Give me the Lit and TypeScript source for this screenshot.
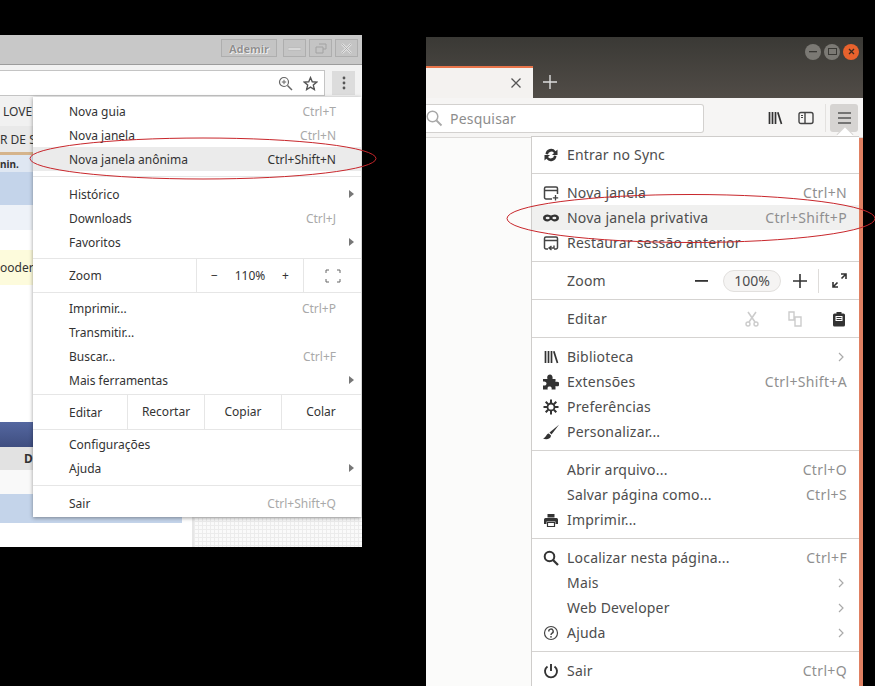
import { LitElement, html, css, svg } from "lit";
import { customElement } from "lit/decorators.js";

const chromeRow = (label: string, sc = "", arrow = false, hl = false) => html`
  <div class="c-row ${hl ? "hl" : ""}">
    <span>${label}</span>
    ${sc ? html`<span class="sc">${sc}</span>` : ""}
    ${arrow ? html`<span class="tri"></span>` : ""}
  </div>`;

const ic = (body: unknown, vb = "0 0 16 16") =>
  html`<svg class="ic" viewBox=${vb} width="16" height="16">${body}</svg>`;

const icons: Record<string, unknown> = {
  sync: ic(svg`<path d="M2.500 7A5.600 5.600 0 0 1 12.600 4.200L14.500 2.500V8H9L11 6A3.300 3.300 0 0 0 5 7.600ZM13.500 9A5.600 5.600 0 0 1 3.400 11.800L1.500 13.500V8H7L5 10A3.300 3.300 0 0 0 11 8.400Z" fill="#333"/>`),
  win: ic(svg`<path d="M9 14H3A1.500 1.500 0 0 1 1.500 12.500V3.500A1.500 1.500 0 0 1 3 2H13A1.500 1.500 0 0 1 14.500 3.500V9" fill="none" stroke="#444" stroke-width="1.500"/><path d="M2 5.500H14" stroke="#444" stroke-width="1.500"/><path d="M12.500 10V15.500M9.800 12.800H15.200" stroke="#444" stroke-width="1.300"/>`),
  mask: ic(svg`<path d="M4.500 4.500C6 4.500 7 5.500 8 5.500S10 4.500 11.500 4.500C14 4.500 16 6 16 8S14 11.500 11.500 11.500C9.800 11.500 9 10 8 10S6.200 11.500 4.500 11.500C2 11.500 0 10 0 8S2 4.500 4.500 4.500Z" fill="#333"/><ellipse cx="4.600" cy="8" rx="2" ry="1.300" fill="#eee"/><ellipse cx="11.400" cy="8" rx="2" ry="1.300" fill="#eee"/>`),
  restore: ic(svg`<path d="M5 14H3A1.500 1.500 0 0 1 1.500 12.500V3.500A1.500 1.500 0 0 1 3 2H13A1.500 1.500 0 0 1 14.500 3.500V12.500A1.500 1.500 0 0 1 13 14H11" fill="none" stroke="#444" stroke-width="1.500"/><path d="M2 5.500H14" stroke="#444" stroke-width="1.500"/><path d="M11 10.500V13H6.500M8.500 11L6 13L8.500 15" fill="none" stroke="#444" stroke-width="1.400"/>`),
  lib: ic(svg`<path d="M2.500 2V14M5.500 2V14M8.500 2V14" stroke="#333" stroke-width="1.700"/><path d="M10.800 2.300L14.500 14" stroke="#333" stroke-width="1.700"/>`),
  ext: ic(svg`<path d="M0 5H4.500C3.500 2.500 5 .5 7 .5S10 2.500 9.500 5H12.500V8C15 7 16.500 8.500 16.500 10S15 13 12.500 12V15.500H8.500C9.200 13.500 8 12.500 6.500 12.500S4 13.500 4.800 15.500H0V11.500C2.500 12 3.500 10.800 3.500 9.500S2.500 7 0 7.500Z" fill="#333"/>`),
  gear: ic(svg`<circle cx="8" cy="8" r="3.500" fill="none" stroke="#333" stroke-width="1.800"/><path d="M8 .5V4M8 12V15.500M.5 8H4M12 8H15.500M2.700 2.700L5.200 5.200M10.800 10.800L13.300 13.300M13.300 2.700L10.800 5.200M5.200 10.800L2.700 13.300" stroke="#333" stroke-width="2"/>`),
  brush: ic(svg`<path d="M16 .8L6.500 8.500L8.500 10.500Z" fill="#333"/><path d="M5.800 9.500C3 10 3.500 13.500 0 14.500C3 16 8 15.200 8 11.500Z" fill="#333"/>`),
  print: ic(svg`<path d="M4.500 2H11.500V5.500H4.500Z" fill="#333"/><path d="M2.500 6H13.500A1.500 1.500 0 0 1 15 7.500V12H12.500V9.500H3.500V12H1V7.500A1.500 1.500 0 0 1 2.500 6Z" fill="#333"/><path d="M4.500 10.500H11.500V14.500H4.500Z" fill="none" stroke="#333" stroke-width="1.200"/>`),
  find: ic(svg`<circle cx="6.500" cy="6.500" r="4.800" fill="none" stroke="#333" stroke-width="2"/><path d="M10 10L15 15" stroke="#333" stroke-width="2.300"/>`),
  help: ic(svg`<circle cx="8" cy="8" r="6.500" fill="none" stroke="#444" stroke-width="1.200"/><path d="M5.800 6.500A2.200 2.200 0 1 1 8.800 8.300C8.100 8.700 8 9 8 10" fill="none" stroke="#444" stroke-width="1.400"/><circle cx="8" cy="11.800" r=".9" fill="#444"/>`),
  quit: ic(svg`<path d="M4.500 3.500A6 6 0 1 0 11.500 3.500" fill="none" stroke="#333" stroke-width="1.900"/><path d="M8 1V8" stroke="#333" stroke-width="1.900"/>`),
};

const chev = svg`<svg class="chev" viewBox="0 0 8 10" width="8" height="10"><path d="M2 1L6 5L2 9" fill="none" stroke="#aaa" stroke-width="1.200"/></svg>`;

const ffRow = (label: string, icon = "", sc = "", more = false, hl = false) => html`
  <div class="f-row ${hl ? "hl" : ""}">
    <span class="f-ic">${icon ? icons[icon] : ""}</span>
    <span class="f-label">${label}</span>
    ${sc ? html`<span class="f-sc">${sc}</span>` : ""}
    ${more ? chev : ""}
  </div>`;

@customElement("app-root")
export class AppRoot extends LitElement {
  static styles = css`
    :host { display: block; position: relative; width: 875px; height: 686px; background: #000; overflow: hidden; }
    .win { position: absolute; overflow: hidden; }

    /* Chrome window */
    .chrome { left: 0; top: 35px; width: 362px; height: 512px; background: #fff; font: 12px "Noto Sans", sans-serif; color: #333; }
    .c-title { height: 25px; background: #c8c8c8; border-bottom: 1px solid #9c9c9c; display: flex; justify-content: flex-end; align-items: flex-start; gap: 3px; padding: 4px 4px 0 0; }
    .c-btn { height: 16px; width: 21px; border: 1px solid #aeaeae; background: #c4c4c4; display: flex; align-items: center; justify-content: center; }
    .c-user { width: 54px; margin-right: 3px; font: bold 11px "Noto Sans", sans-serif; color: #8f8f8f; text-shadow: 0 0 1px #fff, 1px 1px 0 #eee; }
    .c-tool { height: 28px; background: #f2f2f2; display: flex; align-items: center; padding: 4px 7px 0 0; gap: 7px; }
    .omni { flex: 1; height: 26px; background: #fff; border: 1px solid #c4c4c4; border-left: none; box-sizing: border-box; display: flex; align-items: center; justify-content: flex-end; gap: 10px; padding-right: 6px; }
    .kebab { width: 23px; height: 24px; background: #dcdcdc; display: flex; align-items: center; justify-content: center; }
    .page { position: relative; height: 450px; font-size: 12px; background: #fff; }
    .p { height: var(--h); width: 192px; background: var(--bg); padding-left: 3px; box-sizing: border-box; display: flex; align-items: center; white-space: nowrap; overflow: hidden; }
    .grid { position: absolute; left: 192px; right: 0; bottom: 0; height: 30px; border-left: 2px solid #e6e6e6; background-color: #fafafa; background-image: linear-gradient(#ececec 1px, transparent 1px), linear-gradient(90deg, #ececec 1px, transparent 1px); background-size: 4px 4px; }
    .c-menu { position: absolute; left: 33px; top: 62px; width: 328px; height: 420px; background: #fff; box-shadow: 0 1px 4px rgba(0,0,0,.4); box-sizing: border-box; padding-top: 2px; }
    .c-row { height: 24px; display: flex; align-items: center; padding: 0 25px 0 36px; justify-content: space-between; position: relative; }
    .c-row.hl { background: #ebebeb; }
    .sc { color: #a9a9a9; }
    .hl .sc { color: #333; }
    .tri { position: absolute; right: 7px; top: 8px; border-left: 5px solid #777; border-top: 4px solid transparent; border-bottom: 4px solid transparent; }
    .c-sep { height: 1px; background: #e6e6e6; margin: 5px 0 5px; }
    .c-line { display: flex; align-items: center; border-top: 1px solid #e6e6e6; border-bottom: 1px solid #e6e6e6; }
    .c-line .lab { padding-left: 36px; }
    .zoom { height: 33px; margin-top: 4px; }
    .zoom .lab { width: 127px; }
    .zoom .ctl { width: 108px; border-left: 1px solid #e6e6e6; border-right: 1px solid #e6e6e6; height: 100%; display: flex; align-items: center; justify-content: space-between; padding: 0 14px; box-sizing: border-box; }
    .zoom .fs { flex: 1; display: flex; justify-content: center; }
    .edit { height: 34px; margin-top: 2px; }
    .edit .lab { width: 58px; }
    .edit .cell { width: 77px; height: 100%; border-left: 1px solid #e6e6e6; display: flex; align-items: center; justify-content: center; box-sizing: border-box; padding-bottom: 2px; }
    .edit .cell.last { width: 79px; }
    .spacer { height: 3px; }
    .spacer.thin { height: 2px; }

    /* Firefox window */
    .ff { left: 426px; top: 37px; width: 437px; height: 649px; background: #fbfbfa; font: 14px "Noto Sans", sans-serif; color: #4d4d4d; }
    .f-head { height: 61px; background: linear-gradient(#3a3935, #514c47); display: flex; flex-direction: column; }
    .f-ctl { height: 29px; display: flex; justify-content: flex-end; align-items: center; gap: 3px; padding-right: 4px; }
    .dot { width: 16px; height: 16px; border-radius: 50%; background: #7b7974; display: flex; align-items: center; justify-content: center; }
    .dot.x { background: #e8622d; }
    .f-tabs { flex: 1; display: flex; align-items: stretch; }
    .tab { width: 107px; background: #f4f2f0; border-top: 2px solid #e8744a; box-sizing: border-box; display: flex; align-items: center; justify-content: flex-end; padding-right: 12px; }
    .plus { width: 34px; display: flex; align-items: center; justify-content: center; }
    .f-tool { height: 40px; background: #f6f5f4; border-bottom: 1px solid #dcdad8; box-sizing: border-box; display: flex; align-items: center; position: relative; padding: 1px 4px 0 0; }
    .search { width: 278px; height: 29px; background: #fff; border: 1px solid #d3d1cf; border-left: none; border-radius: 0 3px 3px 0; box-sizing: border-box; display: flex; align-items: center; gap: 7px; color: #8d8d8d; letter-spacing: .2px; }
    .tool-ic { display: flex; gap: 15px; margin-left: 63px; align-items: center; }
    .tool-div { width: 1px; height: 28px; background: #e3e1df; margin-left: 11px; }
    .burger { width: 28px; height: 28px; background: #d6d4d2; border-radius: 3px; margin-left: 4px; display: flex; align-items: center; justify-content: center; }
    .strip { position: absolute; right: 0; top: 101px; bottom: 0; width: 4px; background: #e08062; }
    .f-menu { position: absolute; left: 105px; top: 99px; width: 328px; background: #fff; border: 1px solid #cfcdcb; border-right: none; border-bottom: none; box-sizing: border-box; }
    .f-arrow { position: absolute; left: 413px; top: 93px; width: 12px; height: 12px; background: #fff; transform: rotate(45deg); box-shadow: -1px -1px 0 #d8d6d4; }
    .f-sec { padding: 6px 0; border-bottom: 1px solid #d5d3d1; }
    .f-sec.first { padding-top: 5px; }
    .f-row { height: 25px; display: flex; align-items: center; padding: 0 12px 0 0; }
    .f-row.hl { background: #f0f0ef; }
    .f-ic { width: 35px; display: flex; justify-content: flex-end; padding-right: 8px; box-sizing: border-box; flex: none; }
    .f-label { flex: 1; white-space: nowrap; letter-spacing: .2px; }
    .f-sc { color: #8f8f8f; letter-spacing: .35px; }
    .ic { display: block; }
    .chev { display: block; margin-right: 2px; }
    .f-big { height: 37px; display: flex; align-items: center; padding-right: 12px; border-bottom: 1px solid #d5d3d1; }
    .pct { width: 58px; height: 22px; border: 1px solid #e2e0de; background: #f5f4f3; border-radius: 11px; box-sizing: border-box; display: flex; align-items: center; justify-content: center; margin: 0 12px 0 15px; }
    .vdiv { width: 1px; height: 24px; background: #dedcda; margin: 0 13px 0 11px; }
    .edit-ic { display: flex; align-items: center; margin-right: 2px; }
    .cut { margin-right: 27px; }
    .copy { margin-right: 30px; }

    .marks { position: absolute; inset: 0; pointer-events: none; }
  `;

  render() {
    return html`
      <section class="win chrome">
        <div class="c-title">
          <div class="c-btn c-user">Ademir</div>
          <div class="c-btn"><svg width="13" height="6" viewBox="0 0 13 6"><rect y="3" width="13" height="2" fill="#e8e8e8" stroke="#a8a8a8" stroke-width=".5"/></svg></div>
          <div class="c-btn"><svg width="12" height="11" viewBox="0 0 12 11"><path d="M4 1H11V6H8M1 4H8V10H1Z" fill="none" stroke="#a2a2a2"/></svg></div>
          <div class="c-btn"><svg width="11" height="11" viewBox="0 0 11 11"><path d="M1 1L10 10M10 1L1 10" stroke="#e4e4e4" stroke-width="2.400"/><path d="M1 1L10 10M10 1L1 10" stroke="#a6a6a6" stroke-width=".8"/></svg></div>
        </div>
        <div class="c-tool">
          <div class="omni">
            <svg width="15" height="15" viewBox="0 0 15 15"><circle cx="6" cy="6" r="4.500" fill="none" stroke="#666" stroke-width="1.200"/><path d="M9.500 9.500L14 14" stroke="#666" stroke-width="1.500"/><path d="M3.800 6H8.200M6 3.800V8.200" stroke="#666"/></svg>
            <svg width="15" height="15" viewBox="0 0 24 24"><path d="M12 2.500L14.800 9.200L22 9.800L16.500 14.500L18.200 21.600L12 17.800L5.800 21.600L7.500 14.500L2 9.800L9.200 9.200Z" fill="none" stroke="#555" stroke-width="2.200"/></svg>
          </div>
          <div class="kebab"><svg width="4" height="14" viewBox="0 0 4 14"><circle cx="2" cy="2" r="1.400" fill="#555"/><circle cx="2" cy="7" r="1.400" fill="#555"/><circle cx="2" cy="12" r="1.400" fill="#555"/></svg></div>
        </div>
        <div class="page">
          <div class="p" style="--h:29px;--bg:#f1f1f1">LOVE</div>
          <div class="p" style="--h:29px;--bg:#e9e9e9;border-bottom:3px solid #d5b48c;padding-left:0">R DE SI</div>
          <div class="p" style="--h:17px;--bg:#dfe7f2;padding-left:0;font-weight:bold;font-size:10px">nin.</div>
          <div class="p" style="--h:33px;--bg:#c4d4ea"></div>
          <div class="p" style="--h:25px;--bg:#eef2f8"></div>
          <div class="p" style="--h:20px;--bg:#fff"></div>
          <div class="p" style="--h:35px;--bg:#fdfbdc;padding-left:0">ooder</div>
          <div class="p" style="--h:137px;--bg:#fff"></div>
          <div class="p" style="--h:25px;--bg:linear-gradient(#5467a0,#3f4e80)"></div>
          <div class="p" style="--h:23px;--bg:#e2e2e2;padding-left:24px;font-weight:bold">D</div>
          <div class="p" style="--h:24px;--bg:#f9f9f9"></div>
          <div class="p" style="--h:29px;--bg:linear-gradient(90deg,#c4d4ea 182px,#fff 182px)"></div>
          <div class="grid"></div>
        </div>
        <div class="c-menu">
          ${chromeRow("Nova guia", "Ctrl+T")}
          ${chromeRow("Nova janela", "Ctrl+N")}
          ${chromeRow("Nova janela anônima", "Ctrl+Shift+N", false, true)}
          <div class="c-sep"></div>
          ${chromeRow("Histórico", "", true)}
          ${chromeRow("Downloads", "Ctrl+J")}
          ${chromeRow("Favoritos", "", true)}
          <div class="c-line zoom">
            <span class="lab">Zoom</span>
            <div class="ctl"><span>−</span><span>110%</span><span>+</span></div>
            <div class="fs"><svg width="16" height="14" viewBox="0 0 16 14"><path d="M1 4V1H4M12 1H15V4M15 10V13H12M4 13H1V10" fill="none" stroke="#666"/></svg></div>
          </div>
          <div class="spacer"></div>
          ${chromeRow("Imprimir...", "Ctrl+P")}
          ${chromeRow("Transmitir...")}
          ${chromeRow("Buscar...", "Ctrl+F")}
          ${chromeRow("Mais ferramentas", "", true)}
          <div class="c-line edit">
            <span class="lab">Editar</span>
            <div class="cell">Recortar</div>
            <div class="cell">Copiar</div>
            <div class="cell last">Colar</div>
          </div>
          <div class="spacer thin"></div>
          ${chromeRow("Configurações")}
          ${chromeRow("Ajuda", "", true)}
          <div class="c-sep"></div>
          ${chromeRow("Sair", "Ctrl+Shift+Q")}
        </div>
      </section>

      <section class="win ff">
        <div class="f-head">
          <div class="f-ctl">
            <div class="dot"><svg width="8" height="2" viewBox="0 0 8 2"><rect width="8" height="1.300" fill="#3a3935"/></svg></div>
            <div class="dot"><svg width="9" height="7" viewBox="0 0 9 7"><rect x=".5" y=".5" width="8" height="6" fill="none" stroke="#3a3935"/></svg></div>
            <div class="dot x"><svg width="7" height="7" viewBox="0 0 7 7"><path d="M1 1L6 6M6 1L1 6" stroke="#3a2a20" stroke-width="1.300"/></svg></div>
          </div>
          <div class="f-tabs">
            <div class="tab"><svg width="10" height="10" viewBox="0 0 10 10"><path d="M.5 .5L9.500 9.500M9.500 .5L.5 9.500" stroke="#555" stroke-width="1.300"/></svg></div>
            <div class="plus"><svg width="14" height="14" viewBox="0 0 14 14"><path d="M7 0V14M0 7H14" stroke="#ddd" stroke-width="1.400"/></svg></div>
          </div>
        </div>
        <div class="f-tool">
          <div class="search">
            <svg width="17" height="17" viewBox="0 0 17 17"><circle cx="6.500" cy="6.500" r="5.300" fill="none" stroke="#a8a8a8" stroke-width="1.500"/><path d="M10.500 10.500L15.500 15.500" stroke="#a8a8a8" stroke-width="1.800"/></svg>
            <span>Pesquisar</span>
          </div>
          <div class="tool-ic">
            ${icons.lib}
            ${ic(svg`<rect x="1" y="2.500" width="14" height="11" rx="2" fill="none" stroke="#444" stroke-width="1.400"/><path d="M7 3V13" stroke="#444" stroke-width="1.400"/><path d="M3 5.500H5M3 7.500H5" stroke="#444"/>`)}
          </div>
          <div class="tool-div"></div>
          <div class="burger"><svg width="13" height="12" viewBox="0 0 13 12"><path d="M0 1H13M0 6H13M0 11H13" stroke="#555" stroke-width="1.600"/></svg></div>
        </div>
        <div class="strip"></div>
        <div class="f-arrow"></div>
        <div class="f-menu">
          <div class="f-sec first">${ffRow("Entrar no Sync", "sync")}</div>
          <div class="f-sec">
            ${ffRow("Nova janela", "win", "Ctrl+N")}
            ${ffRow("Nova janela privativa", "mask", "Ctrl+Shift+P", false, true)}
            ${ffRow("Restaurar sessão anterior", "restore")}
          </div>
          <div class="f-big">
            <span class="f-ic"></span><span class="f-label">Zoom</span>
            <svg width="13" height="2" viewBox="0 0 13 2"><rect width="13" height="1.800" fill="#333"/></svg>
            <div class="pct">100%</div>
            <svg width="14" height="14" viewBox="0 0 14 14"><path d="M7 0V14M0 7H14" stroke="#333" stroke-width="1.600"/></svg>
            <div class="vdiv"></div>
            <svg width="15" height="15" viewBox="0 0 15 15"><path d="M9 1H14V6M14 1L9.500 5.500M6 14H1V9M1 14L5.500 9.500" fill="none" stroke="#333" stroke-width="1.600"/></svg>
          </div>
          <div class="f-big">
            <span class="f-ic"></span><span class="f-label">Editar</span>
            <div class="edit-ic">
              <svg class="cut" width="16" height="16" viewBox="0 0 16 16"><path d="M4 1L11 11M12 1L5 11" stroke="#ccc" stroke-width="1.600"/><circle cx="4" cy="13" r="2" fill="none" stroke="#ccc" stroke-width="1.400"/><circle cx="12" cy="13" r="2" fill="none" stroke="#ccc" stroke-width="1.400"/></svg>
              <svg class="copy" width="16" height="16" viewBox="0 0 16 16"><path d="M2 1H7V9H2ZM8 6H14V15H8Z" fill="none" stroke="#ccc" stroke-width="1.400"/></svg>
              <svg width="12" height="16" viewBox="1 .5 12 15"><path d="M2.500 2.500H4.500V1H9.500V2.500H11.500A1.500 1.500 0 0 1 13 4V14A1.500 1.500 0 0 1 11.500 15.500H2.500A1.500 1.500 0 0 1 1 14V4A1.500 1.500 0 0 1 2.500 2.500Z" fill="#333"/><rect x="3.500" y="5" width="7" height="5" fill="#fff"/><path d="M4.500 6.500H9.500M4.500 8.500H9.500" stroke="#333"/></svg>
            </div>
          </div>
          <div class="f-sec">
            ${ffRow("Biblioteca", "lib", "", true)}
            ${ffRow("Extensões", "ext", "Ctrl+Shift+A")}
            ${ffRow("Preferências", "gear")}
            ${ffRow("Personalizar...", "brush")}
          </div>
          <div class="f-sec">
            ${ffRow("Abrir arquivo...", "", "Ctrl+O")}
            ${ffRow("Salvar página como...", "", "Ctrl+S")}
            ${ffRow("Imprimir...", "print")}
          </div>
          <div class="f-sec">
            ${ffRow("Localizar nesta página...", "find", "Ctrl+F")}
            ${ffRow("Mais", "", "", true)}
            ${ffRow("Web Developer", "", "", true)}
            ${ffRow("Ajuda", "help", "", true)}
          </div>
          <div class="f-sec">${ffRow("Sair", "quit", "Ctrl+Q")}</div>
        </div>
      </section>

      <svg class="marks" width="875" height="686" viewBox="0 0 875 686">
        <ellipse cx="203" cy="158.500" rx="173" ry="20.500" fill="none" stroke="#c8262b" stroke-width="1"/>
        <ellipse cx="691" cy="218.500" rx="184" ry="24" fill="none" stroke="#c8262b" stroke-width="1"/>
      </svg>
    `;
  }
}
